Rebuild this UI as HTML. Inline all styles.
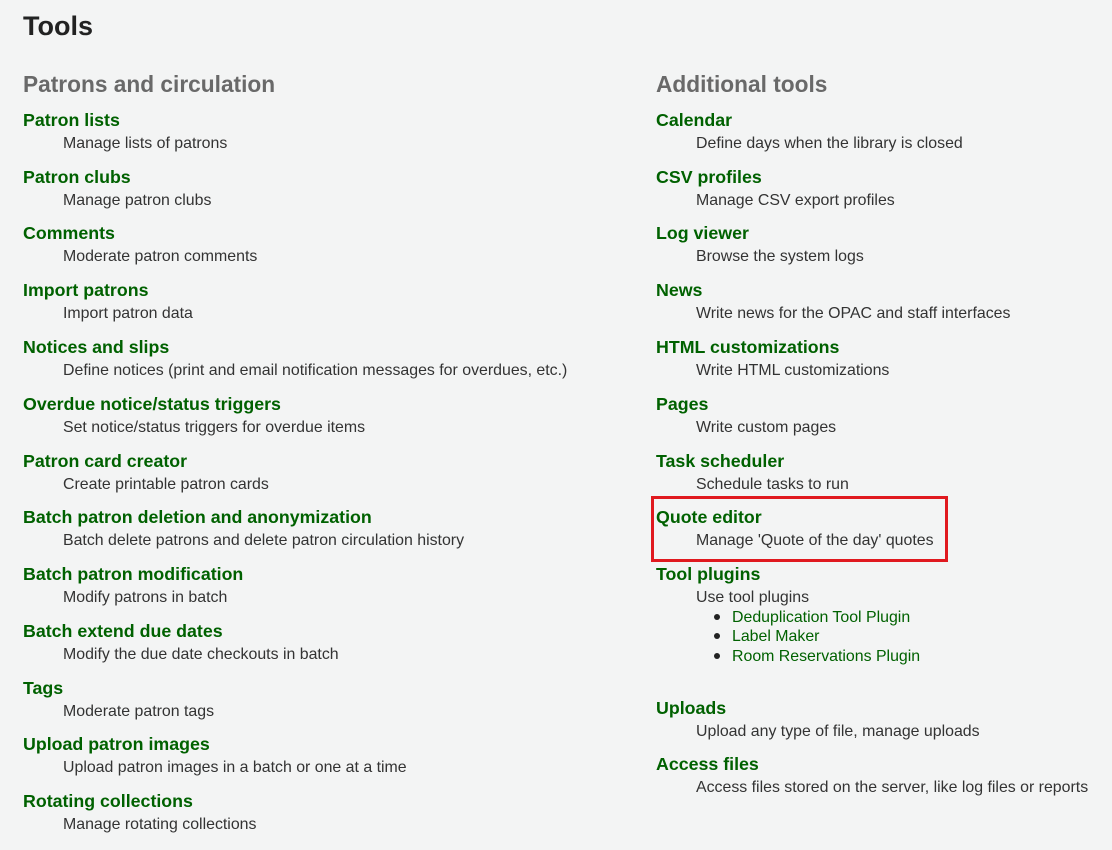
<!DOCTYPE html>
<html><head><meta charset="utf-8"><style>
body{margin:0;width:1112px;height:850px;background:#f3f4f4;font-family:"Liberation Sans",Arial,sans-serif;position:relative;overflow:hidden}
.a{position:absolute;white-space:nowrap}
.h1{font-size:27px;font-weight:bold;color:#222;line-height:34px}
.h2{font-size:22.7px;font-weight:bold;color:#696969;line-height:28px}
.t{font-size:17.8px;font-weight:bold;color:#006100;line-height:22px}
.d{font-size:15.9px;color:#333;line-height:20px}
.l{font-size:15.9px;color:#006100;line-height:20px}
.b{position:absolute;width:6px;height:6px;border-radius:50%;background:#222}
.box{position:absolute;left:651px;top:496px;width:291px;height:60px;border:3px solid #e0191f}
</style></head><body>
<div class="a h1" style="left:23px;top:9px">Tools</div>
<div class="a h2" style="left:23px;top:70px">Patrons and circulation</div>
<div class="a h2" style="left:656px;top:70px">Additional tools</div>

<div class="a t" style="left:23px;top:109px">Patron lists</div><div class="a d" style="left:63px;top:134px">Manage lists of patrons</div>
<div class="a t" style="left:23px;top:166px">Patron clubs</div><div class="a d" style="left:63px;top:191px">Manage patron clubs</div>
<div class="a t" style="left:23px;top:222px">Comments</div><div class="a d" style="left:63px;top:247px">Moderate patron comments</div>
<div class="a t" style="left:23px;top:279px">Import patrons</div><div class="a d" style="left:63px;top:304px">Import patron data</div>
<div class="a t" style="left:23px;top:336px">Notices and slips</div><div class="a d" style="left:63px;top:361px">Define notices (print and email notification messages for overdues, etc.)</div>
<div class="a t" style="left:23px;top:393px">Overdue notice/status triggers</div><div class="a d" style="left:63px;top:418px">Set notice/status triggers for overdue items</div>
<div class="a t" style="left:23px;top:450px">Patron card creator</div><div class="a d" style="left:63px;top:475px">Create printable patron cards</div>
<div class="a t" style="left:23px;top:506px">Batch patron deletion and anonymization</div><div class="a d" style="left:63px;top:531px">Batch delete patrons and delete patron circulation history</div>
<div class="a t" style="left:23px;top:563px">Batch patron modification</div><div class="a d" style="left:63px;top:588px">Modify patrons in batch</div>
<div class="a t" style="left:23px;top:620px">Batch extend due dates</div><div class="a d" style="left:63px;top:645px">Modify the due date checkouts in batch</div>
<div class="a t" style="left:23px;top:677px">Tags</div><div class="a d" style="left:63px;top:702px">Moderate patron tags</div>
<div class="a t" style="left:23px;top:733px">Upload patron images</div><div class="a d" style="left:63px;top:758px">Upload patron images in a batch or one at a time</div>
<div class="a t" style="left:23px;top:790px">Rotating collections</div><div class="a d" style="left:63px;top:815px">Manage rotating collections</div>

<div class="a t" style="left:656px;top:109px">Calendar</div><div class="a d" style="left:696px;top:134px">Define days when the library is closed</div>
<div class="a t" style="left:656px;top:166px">CSV profiles</div><div class="a d" style="left:696px;top:191px">Manage CSV export profiles</div>
<div class="a t" style="left:656px;top:222px">Log viewer</div><div class="a d" style="left:696px;top:247px">Browse the system logs</div>
<div class="a t" style="left:656px;top:279px">News</div><div class="a d" style="left:696px;top:304px">Write news for the OPAC and staff interfaces</div>
<div class="a t" style="left:656px;top:336px">HTML customizations</div><div class="a d" style="left:696px;top:361px">Write HTML customizations</div>
<div class="a t" style="left:656px;top:393px">Pages</div><div class="a d" style="left:696px;top:418px">Write custom pages</div>
<div class="a t" style="left:656px;top:450px">Task scheduler</div><div class="a d" style="left:696px;top:475px">Schedule tasks to run</div>
<div class="box"></div>
<div class="a t" style="left:656px;top:506px">Quote editor</div><div class="a d" style="left:696px;top:531px">Manage 'Quote of the day' quotes</div>
<div class="a t" style="left:656px;top:563px">Tool plugins</div><div class="a d" style="left:696px;top:588px">Use tool plugins</div>
<div class="b" style="left:714px;top:614px"></div><div class="a l" style="left:732px;top:608px">Deduplication Tool Plugin</div>
<div class="b" style="left:714px;top:633px"></div><div class="a l" style="left:732px;top:627px">Label Maker</div>
<div class="b" style="left:714px;top:653px"></div><div class="a l" style="left:732px;top:647px">Room Reservations Plugin</div>
<div class="a t" style="left:656px;top:697px">Uploads</div><div class="a d" style="left:696px;top:722px">Upload any type of file, manage uploads</div>
<div class="a t" style="left:656px;top:753px">Access files</div><div class="a d" style="left:696px;top:778px">Access files stored on the server, like log files or reports</div>
</body></html>
